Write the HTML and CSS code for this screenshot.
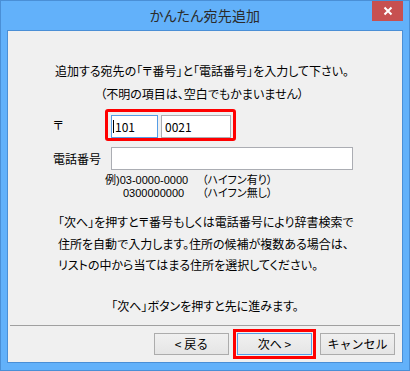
FILE: index.html
```html
<!DOCTYPE html>
<html lang="ja">
<head>
  <meta charset="UTF-8">
  <title>かんたん宛先追加</title>
  <link rel="stylesheet" href="styles.css">
</head>
<body>
  <div class="window">
    <div class="titlebar">
      <span class="title">かんたん宛先追加</span>
      <div class="close-btn">
        <svg width="10" height="10" viewBox="0 0 10 10">
          <path d="M1.5 1.5 L8.5 8.5 M8.5 1.5 L1.5 8.5" stroke="#fff" stroke-width="2" />
        </svg>
      </div>
    </div>

    <div class="client">
      <p class="lead">
        追加する宛先の「〒番号」と「電話番号」を入力して下さい。<br>
        （不明の項目は、空白でもかまいません）
      </p>

      <div class="form-grid">
        <div class="label">〒</div>
        <div class="zip-box">
          <div class="field zip1 focused"><span class="caret"></span>101</div>
          <div class="field zip2">0021</div>
        </div>
        <div class="label">電話番号</div>
        <div class="field phone"></div>
      </div>

      <div class="examples">
        <span>例)03-0000-0000</span><span>（ハイフン有り）</span>
        <span class="indent">0300000000</span><span>（ハイフン無し）</span>
      </div>

      <p class="note">
        「次へ」を押すと〒番号もしくは電話番号により辞書検索で<br>
        住所を自動で入力します。住所の候補が複数ある場合は、<br>
        リストの中から当てはまる住所を選択してください。
      </p>

      <p class="next-hint">「次へ」ボタンを押すと先に進みます。</p>

      <div class="separator"></div>

      <div class="buttons">
        <button class="btn">&lt; 戻る</button>
        <button class="btn default">次へ &gt;</button>
        <button class="btn">キャンセル</button>
      </div>
    </div>
  </div>
</body>
</html>
```

FILE: styles.css
```css
* {
  box-sizing: border-box;
}

body {
  margin: 0;
  font-family: "Noto Sans CJK JP", "Noto Sans", sans-serif;
  font-size: 12px;
  color: #000;
  background: #fff;
}

.window {
  width: 410px;
  height: 371px;
  border: 1px solid #4a8fd6;
  background: #62b1fa;
  padding: 0 6px 7px;
}

.titlebar {
  height: 29px;
  display: grid;
  grid-template-columns: 1fr auto 1fr;
  margin: 0 -6px;
}

.title {
  grid-column: 2;
  font-size: 14px;
  line-height: 29px;
  color: #2b2b2b;
  font-feature-settings: "palt";
  letter-spacing: 0.2px;
}

.close-btn {
  grid-column: 3;
  justify-self: end;
  width: 31px;
  height: 20px;
  margin-right: 6px;
  background: #c75050;
  display: flex;
  align-items: center;
  justify-content: center;
}

.client {
  height: 333px;
  border: 1px solid #4a8fd6;
  background: #f0f0f0;
  padding-top: 28px;
  font-feature-settings: "palt";
}

.lead {
  margin: 0;
  line-height: 23px;
  text-align: center;
  padding-right: 6px;
}

.form-grid {
  margin-top: 4px;
  padding-left: 45px;
  display: grid;
  grid-template-columns: 52px auto;
  row-gap: 6px;
  align-items: center;
}

.label {
  line-height: 16px;
}

.zip-box {
  justify-self: start;
  display: flex;
  gap: 3px;
  border: 3px solid #ff0000;
  border-radius: 3px;
  padding: 3px 2px 0 3px;
}

.field {
  height: 23px;
  border: 1px solid #abadb3;
  background: #fff;
  line-height: 21px;
  padding-left: 3px;
  display: flex;
  align-items: center;
}

.field.focused {
  border-color: #569de5;
}

.caret {
  width: 1px;
  height: 13px;
  background: #000;
  margin-right: 1px;
}

.zip1 {
  width: 47px;
  padding-left: 1px;
}

.zip2 {
  width: 70px;
}

.phone {
  width: 242px;
  margin-left: 6px;
}

.examples {
  margin-top: 4px;
  padding-left: 97px;
  display: grid;
  grid-template-columns: 97px auto;
  line-height: 13px;
  font-family: "Liberation Sans", "Noto Sans CJK JP", sans-serif;
  font-size: 11px;
}

.examples .indent {
  padding-left: 18px;
}

.note {
  margin: 11px 0 0;
  padding-left: 50px;
  line-height: 21.5px;
}

.next-hint {
  margin: 19px 0 0;
  line-height: 22px;
  text-align: center;
}

.separator {
  margin: 8px 2px 0;
  height: 1px;
  background: #a0a0a0;
}

.buttons {
  margin-top: 7px;
  display: flex;
  justify-content: flex-end;
  gap: 8px;
  padding-right: 7px;
}

.btn {
  width: 75px;
  height: 22px;
  border: 1px solid #acacac;
  background: linear-gradient(#f0f0f0, #e5e5e5);
  font-family: inherit;
  font-size: 12px;
  color: #000;
  padding: 0;
  line-height: 20px;
}

.btn.default {
  border-color: #569de5;
  outline: 3px solid #ff0000;
  outline-offset: 1px;
  border-radius: 0;
}
```
